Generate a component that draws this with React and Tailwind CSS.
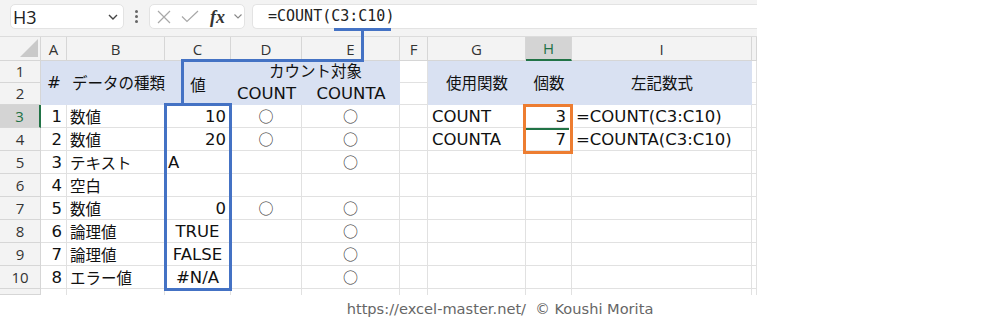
import React from "react";

const HDR = "border-r border-b border-[#d6d6d6] bg-[#f3f3f3] flex items-center justify-center font-['Open_Sans',sans-serif] text-[15px] text-[#333] overflow-hidden";
const HDR_SEL = "border-r border-b-2 border-r-[#d6d6d6] border-b-[#217346] bg-[#d4d4d4] flex items-center justify-center font-['Open_Sans',sans-serif] text-[15px] text-[#1e7145] overflow-hidden";
const RH = "border-r border-b border-[#d6d6d6] bg-[#f3f3f3] flex items-center justify-center font-['Open_Sans',sans-serif] text-[15px] text-[#333] overflow-hidden";
const RH_SEL = "border-r-2 border-b border-r-[#217346] border-b-[#d6d6d6] bg-[#d4d4d4] flex items-center justify-center font-['Open_Sans',sans-serif] text-[15px] text-[#1e7145] overflow-hidden";
const CELL = "border-r border-b border-[#e1e1e1] bg-white flex items-center overflow-hidden whitespace-nowrap text-[#111]";
const BLUE = "bg-[#d9e1f2] flex items-center justify-center overflow-hidden whitespace-nowrap text-[#111]";
const JP = "font-['Noto_Sans_CJK_JP',sans-serif] text-[15.5px]";
const LAT = "font-['DejaVu_Sans',sans-serif] text-[16.5px]";
const CIRC = "font-['Noto_Sans_CJK_JP',sans-serif] text-[15px] text-[#333]";

const rows = [
  [1, "数値", "10", "r", true, true],
  [2, "数値", "20", "r", true, true],
  [3, "テキスト", "A", "l", false, true],
  [4, "空白", "", "", false, false],
  [5, "数値", "0", "r", true, true],
  [6, "論理値", "TRUE", "c", false, true],
  [7, "論理値", "FALSE", "c", false, true],
  [8, "エラー値", "#N/A", "c", false, true],
];

const right = [
  ["COUNT", "3", "=COUNT(C3:C10)"],
  ["COUNTA", "7", "=COUNTA(C3:C10)"],
];

function Toolbar() {
  return (
    <div className="h-[37px] bg-[#f3f3f3] border-b border-[#dcdcdc] flex items-start pt-[4px] pl-[10px]">
      <div className="w-[114px] h-[25px] shrink-0 bg-white rounded-[5px] border border-[#e3e3e3] flex items-center justify-between pl-[2px] pr-[5px]">
        <span className="font-['Open_Sans',sans-serif] text-[18px] text-[#222] leading-none">H3</span>
        <svg width="10" height="6" viewBox="0 0 10 6">
          <path d="M1 1L5 5L9 1" stroke="#444" strokeWidth="1.4" fill="none" />
        </svg>
      </div>
      <div className="w-[25px] h-[25px] shrink-0 flex flex-col items-center justify-center gap-[2px]">
        <span className="w-[3px] h-[3px] rounded-full bg-[#666]" />
        <span className="w-[3px] h-[3px] rounded-full bg-[#666]" />
        <span className="w-[3px] h-[3px] rounded-full bg-[#666]" />
      </div>
      <div className="w-[96px] h-[25px] shrink-0 bg-white rounded-[5px] border border-[#e3e3e3] flex items-center pl-[7px]">
        <svg width="14" height="14" viewBox="0 0 14 14">
          <path d="M1 1L13 13M13 1L1 13" stroke="#a8a8a8" strokeWidth="1.2" fill="none" />
        </svg>
        <svg className="ml-[10px]" width="18" height="13" viewBox="0 0 18 13">
          <path d="M1 6.5L6 11.5L17 1" stroke="#a8a8a8" strokeWidth="1.2" fill="none" />
        </svg>
        <span className="ml-[11px] font-['Liberation_Serif',serif] italic font-bold text-[18px] leading-none text-[#333]">fx</span>
        <svg className="ml-[9px]" width="8" height="5" viewBox="0 0 8 5">
          <path d="M0.5 0.5L4 4L7.5 0.5" stroke="#888" strokeWidth="1.1" fill="none" />
        </svg>
      </div>
      <div className="ml-[7px] flex-1 h-[25px] bg-white rounded-l-[5px] border border-r-0 border-[#e3e3e3] flex items-center pl-[15px]">
        <span className="font-['DejaVu_Sans_Mono',monospace] text-[15px] text-[#222] leading-none">=COUNT(C3:C10)</span>
      </div>
    </div>
  );
}

function Sheet() {
  const letters = ["A", "B", "C", "D", "E", "F", "G", "H", "I"];
  return (
    <div className="grid grid-cols-[41px_26px_98px_66px_71px_98px_28px_98px_46px_180px_5px] grid-rows-[24px_22px_22px_23px_23px_23px_23px_23px_23px_23px_23px_6px]">
      {/* header row */}
      <div className={HDR + " relative"}>
        <svg className="absolute right-[2px] bottom-[3px]" width="18" height="18" viewBox="0 0 18 18">
          <path d="M18 0L18 18L0 18Z" fill="#c9c9c9" />
        </svg>
      </div>
      {letters.map((l) => (
        <div key={l} className={l === "H" ? HDR_SEL : HDR}>
          <span className="pt-[1px]">{l}</span>
        </div>
      ))}
      <div className={HDR} />

      {/* row 1 */}
      <div className={RH}>1</div>
      <div className={BLUE + " row-span-2 " + LAT}>#</div>
      <div className={BLUE + " row-span-2 justify-start pl-[5px] " + JP}>データの種類</div>
      <div className={BLUE + " row-span-2 " + JP}>
        <span className="pt-[4px]">値</span>
      </div>
      <div className="col-span-2 bg-[#d9e1f2] flex items-start justify-center whitespace-nowrap text-[#111] leading-[18px] font-['Noto_Sans_CJK_JP',sans-serif] text-[15.5px]">
        カウント対象
      </div>
      <div className={CELL} />
      <div className={BLUE + " row-span-2 " + JP}>使用関数</div>
      <div className={BLUE + " row-span-2 " + JP}>個数</div>
      <div className={BLUE + " row-span-2 " + JP}>左記数式</div>
      <div className={CELL} />

      {/* row 2 */}
      <div className={RH}>2</div>
      <div className={BLUE + " " + LAT}>COUNT</div>
      <div className={BLUE + " " + LAT}>COUNTA</div>
      <div className={CELL} />
      <div className={CELL} />

      {/* rows 3-10 */}
      {rows.map((r, i) => {
        const [n, kind, val, al, d, e] = r;
        const rv = right[i];
        const alignCls = al === "r" ? " justify-end pr-[4px]" : al === "c" ? " justify-center" : " justify-start pl-[3px]";
        return (
          <React.Fragment key={n}>
            <div className={i === 0 ? RH_SEL : RH}>{i + 3}</div>
            <div className={CELL + " justify-end pr-[4px] pt-[2px] " + LAT}>{n}</div>
            <div className={CELL + " justify-start pl-[3px] pt-[2px] " + JP}>{kind}</div>
            <div className={CELL + alignCls + " pt-[2px] " + LAT}>{val}</div>
            <div className={CELL + " justify-center pt-[1px] " + CIRC}>{d ? "○" : ""}</div>
            <div className={CELL + " justify-center pt-[1px] " + CIRC}>{e ? "○" : ""}</div>
            <div className={CELL} />
            <div className={CELL + " justify-start pl-[4px] pt-[2px] " + LAT}>{rv ? rv[0] : ""}</div>
            <div className={CELL + " justify-end pr-[5px] pt-[2px] " + LAT}>{rv ? rv[1] : ""}</div>
            <div className={CELL + " justify-start pl-[4px] pt-[2px] " + LAT}>{rv ? rv[2] : ""}</div>
            <div className={CELL} />
          </React.Fragment>
        );
      })}

      {/* partial row 11 */}
      <div className={RH} />
      {Array.from({ length: 10 }).map((_, i) => (
        <div key={i} className="border-r border-[#e1e1e1] bg-white" />
      ))}
    </div>
  );
}

export default function App() {
  return (
    <div className="w-[1000px] h-[323px] bg-white flex flex-col overflow-hidden">
      <div className="relative w-[757px] h-[295px] overflow-hidden shrink-0">
        <Toolbar />
        <Sheet />
        {/* H3 selection */}
        <div className="absolute left-[526px] top-[128px] w-[46px] h-[2px] bg-[#217346]" />
        <div className="absolute left-[569px] top-[126px] w-[5px] h-[5px] bg-[#217346] border border-white" />
        {/* blue annotation */}
        <div className="absolute left-[334px] top-[28px] w-[57px] h-[3px] bg-[#4472c4]" />
        <div className="absolute left-[361px] top-[28px] w-[3px] h-[34px] bg-[#4472c4]" />
        <div className="absolute left-[181px] top-[59px] w-[183px] h-[3px] bg-[#4472c4]" />
        <div className="absolute left-[181px] top-[59px] w-[3px] h-[46px] bg-[#4472c4]" />
        <div className="absolute left-[164px] top-[103px] w-[68px] h-[188px] border-[3px] border-[#4472c4]" />
        {/* orange annotation */}
        <div className="absolute left-[523px] top-[104px] w-[50px] h-[50px] border-[3px] border-[#ed7d31]" />
      </div>
      <div className="flex-1 flex items-center justify-center">
        <span className="font-['DejaVu_Sans',sans-serif] text-[14.6px] text-[#666]">https://excel-master.net/&nbsp;&nbsp;© Koushi Morita</span>
      </div>
    </div>
  );
}
